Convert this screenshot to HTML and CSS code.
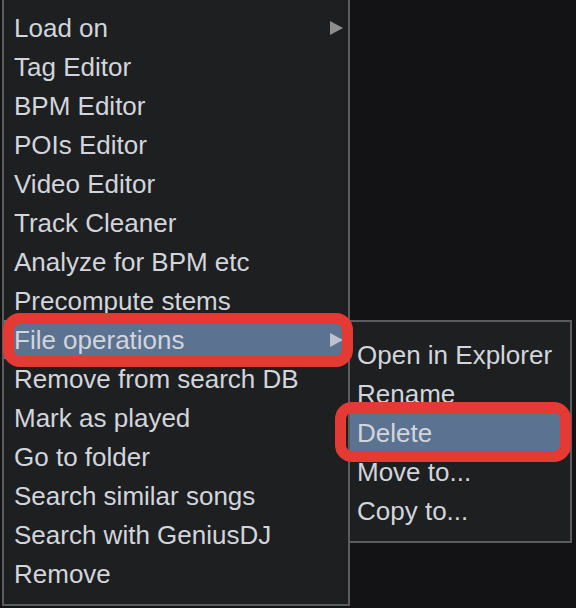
FILE: index.html
```html
<!DOCTYPE html>
<html lang="en">
<head>
    <meta charset="UTF-8">
    <meta name="viewport" content="width=device-width, initial-scale=1.0">
    <title>Context menu</title>
    <link rel="stylesheet" href="styles.css">
</head>
<body>
    <div class="menu">
        <div class="item sub">Load on<span class="arrow"></span></div>
        <div class="item">Tag Editor</div>
        <div class="item">BPM Editor</div>
        <div class="item">POIs Editor</div>
        <div class="item">Video Editor</div>
        <div class="item">Track Cleaner</div>
        <div class="item">Analyze for BPM etc</div>
        <div class="item">Precompute stems</div>
        <div class="item sub active marked">File operations<span class="arrow"></span>
            <div class="submenu">
                <div class="item">Open in Explorer</div>
                <div class="item">Rename</div>
                <div class="item active marked">Delete</div>
                <div class="item">Move to...</div>
                <div class="item">Copy to...</div>
            </div>
        </div>
        <div class="item">Remove from search DB</div>
        <div class="item">Mark as played</div>
        <div class="item">Go to folder</div>
        <div class="item">Search similar songs</div>
        <div class="item">Search with GeniusDJ</div>
        <div class="item">Remove</div>
    </div>
</body>
</html>
```

FILE: styles.css
```css
body {
    margin: 0;
    background-color: #131315;
    font-family: "Liberation Sans", Arial, sans-serif;
    font-size: 26px;
    color: #d2d5db;
}

.menu {
    box-sizing: border-box;
    width: 348px;
    margin-left: 2px;
    padding: 8px 0 11px;
    background-color: #1e1f21;
    border: 2px solid #5c5c5e;
    border-top: none;
}

.item {
    position: relative;
    display: flex;
    align-items: center;
    height: 39px;
    padding-top: 2px;
    box-sizing: border-box;
    padding-left: 10px;
    white-space: nowrap;
}

.arrow {
    margin-left: auto;
    margin-right: 5px;
    margin-top: -2px;
    width: 0;
    height: 0;
    border-top: 7px solid transparent;
    border-bottom: 7px solid transparent;
    border-left: 13px solid #8e8e8e;
}

.active {
    background-color: #5b7291;
}

.active > .arrow {
    border-left-color: #bcc4d0;
}

.marked::after {
    content: "";
    position: absolute;
    top: -7px;
    right: -5px;
    bottom: -8px;
    left: -1px;
    border: 11px solid #e53a33;
    border-radius: 17px;
    pointer-events: none;
    z-index: 2;
}

.submenu {
    position: absolute;
    top: 0;
    left: 100%;
    box-sizing: border-box;
    width: 224px;
    padding: 13px 0 11px;
    background-color: #1e1f21;
    border: 2px solid #5c5c5e;
    color: #d2d5db;
    z-index: 1;
}

.submenu .item {
    padding-left: 7px;
}

.submenu .marked::after {
    top: -11px;
    right: -1px;
    bottom: -10px;
    left: -15px;
}
```
